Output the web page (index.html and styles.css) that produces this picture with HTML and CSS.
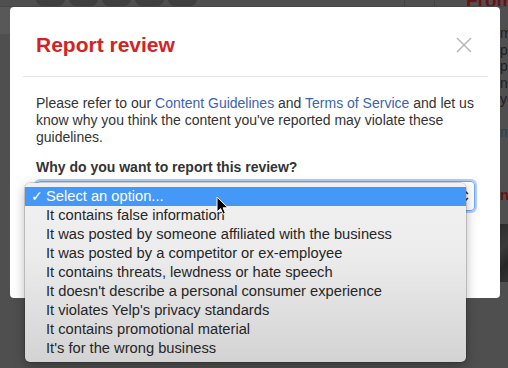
FILE: index.html
```html
<!DOCTYPE html>
<html>
<head>
<meta charset="utf-8">
<title>Report review</title>
<link rel="stylesheet" href="styles.css">
</head>
<body>
<div class="page">
  <div class="topbar">
    <div class="tb-buttons">
      <span class="tb-btn"></span><span class="tb-btn"></span><span class="tb-btn"></span><span class="tb-btn"></span><span class="tb-btn"></span>
    </div>
    <div class="tb-cells"><span class="tb-cell"></span><span class="tb-cell"></span></div>
    <div class="from">From</div>
  </div>
  <div class="content">
    <div class="leftnav"></div>
    <div class="main"></div>
    <div class="side">
      <div class="side-text">
        <span>may</span><span>post</span><span>point</span><span>nam</span><span>you</span><span>&nbsp;</span><span class="side-link">more</span>
      </div>
      <div class="side-red">n</div>
      <div class="side-photo"></div>
    </div>
  </div>
</div>

<div class="modal">
  <div class="modal-header">
    <h2 class="title">Report review</h2>
    <svg class="close" width="16" height="16" viewBox="0 0 16 16"><path d="M1 1 L15 15 M15 1 L1 15" stroke="#b3b3b3" stroke-width="1.4" fill="none"/></svg>
  </div>
  <div class="modal-body">
    <p class="intro">Please refer to our <a href="#">Content Guidelines</a> and <a href="#">Terms of Service</a> and let us know why you think the content you've reported may violate these guidelines.</p>
    <p class="question">Why do you want to report this review?</p>
    <div class="select">
      <span class="select-value">Select an option...</span>
      <svg class="select-arrows" width="8" height="14" viewBox="0 0 8 14"><path d="M1 5 L4 2 L7 5 M1 9 L4 12 L7 9" stroke="#333" stroke-width="1.5" fill="none"/></svg>
    </div>
  </div>
</div>

<div class="dropdown">
  <div class="option selected"><span class="check">✓</span>Select an option...</div>
  <div class="option">It contains false information</div>
  <div class="option">It was posted by someone affiliated with the business</div>
  <div class="option">It was posted by a competitor or ex-employee</div>
  <div class="option">It contains threats, lewdness or hate speech</div>
  <div class="option">It doesn't describe a personal consumer experience</div>
  <div class="option">It violates Yelp's privacy standards</div>
  <div class="option">It contains promotional material</div>
  <div class="option">It's for the wrong business</div>
</div>

<svg class="cursor" width="13" height="20" viewBox="0 0 13 20"><path d="M1 1 L1 16 L4.6 12.6 L7 18.2 L9.4 17.2 L7.1 11.8 L12 11.8 Z" fill="#000" stroke="#fff" stroke-width="1" stroke-linejoin="round"/></svg>
</body>
</html>
```

FILE: styles.css
```css
* { box-sizing: border-box; }
html, body { margin: 0; padding: 0; }
body {
  width: 508px;
  height: 368px;
  overflow: hidden;
  position: relative;
  background: #4f4f4f;
  font-family: "Liberation Sans", Arial, Helvetica, sans-serif;
}

/* dimmed page behind the overlay */
.page { display: flex; flex-direction: column; height: 100%; }
.topbar {
  height: 7px;
  display: flex;
  align-items: flex-end;
  overflow: hidden;
  border-bottom: 1px solid #474747;
}
.tb-buttons { display: flex; gap: 4px; margin-left: 36px; height: 7px; }
.tb-btn {
  width: 29px;
  height: 7px;
  background: #3f3f3f;
  border-radius: 0 0 7px 7px;
}
.tb-cells { display: flex; margin-left: 207px; height: 7px; }
.tb-cell { width: 30px; height: 7px; border-left: 1px solid #444; }
.from {
  margin-left: 2px;
  font-size: 19px;
  font-weight: bold;
  line-height: 19px;
  color: #6b1111;
  margin-bottom: -4px;
}
.content { flex: 1; display: grid; grid-template-columns: 23px 477px 8px; }
.leftnav { height: 27px; background: #585858; border-right: 1px solid #4a4a4a; }
.side { overflow: hidden; white-space: nowrap; padding-top: 18px; }
.side-text { display: flex; flex-direction: column; font-size: 14px; line-height: 16.5px; color: #1e1e1e; }
.side-link { color: #24405e; }
.side-red { margin-top: 45px; font-size: 15px; font-weight: bold; color: #6b1111; line-height: 18px; }
.side-photo {
  margin-top: 20px;
  height: 58px;
  background: linear-gradient(135deg, #2b2b2b, #3a3a3a 40%, #262626 70%, #333);
}

/* modal */
.modal {
  position: absolute;
  left: 10px;
  top: 7px;
  width: 490px;
  height: 291px;
  background: #fff;
  border-radius: 4px;
  padding: 0 12px 0 13px;
}
.modal-header {
  height: 70px;
  padding: 7px 16px 0 13px;
  display: flex;
  align-items: center;
  justify-content: space-between;
  border-bottom: 1px solid #e6e6e6;
}
.title {
  margin: 0;
  font-size: 21px;
  line-height: 24px;
  font-weight: bold;
  color: #d32323;
}
.close { display: block; }
.modal-body { padding: 18px 13px 0; }
.intro, .question {
  margin: 0;
  font-size: 14px;
  line-height: 17px;
  color: #333;
}
.intro a { color: #3d63ae; text-decoration: none; }
.question { margin-top: 13px; font-weight: bold; }
.select {
  margin-top: 5px;
  height: 30px;
  border: 1px solid #6fa6f3;
  border-radius: 4px;
  box-shadow: 0 0 0 2px rgba(112, 165, 240, 0.55);
  display: flex;
  align-items: center;
  justify-content: space-between;
  padding: 0 5px 0 10px;
  font-size: 14px;
  color: #333;
}
.select-arrows { display: block; }

/* native popup list */
.dropdown {
  position: absolute;
  left: 25px;
  top: 183px;
  width: 441px;
  height: 179px;
  padding: 4px 0;
  border-radius: 5px;
  background: linear-gradient(#f1f1f1, #ececec 40%, #d3d3d3);
  box-shadow: 0 0 0 0.5px rgba(0, 0, 0, 0.3), 0 4px 12px rgba(0, 0, 0, 0.3);
}
.option {
  position: relative;
  height: 19px;
  line-height: 19px;
  padding-left: 21px;
  font-size: 14.7px;
  color: #262626;
  white-space: nowrap;
}
.option.selected { background: #4499f8; color: #fff; }
.check { position: absolute; left: 6px; top: 0; font-family: "DejaVu Sans", sans-serif; font-size: 14px; }

.cursor { position: absolute; left: 216px; top: 196px; }
```
